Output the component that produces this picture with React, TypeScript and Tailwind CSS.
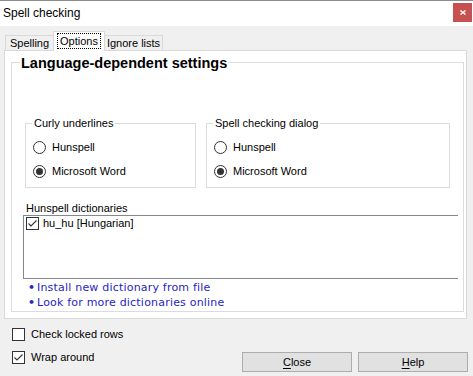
import React from "react";

const Check = () => (
  <svg width="11" height="11" viewBox="0 0 11 11" className="block">
    <polyline points="1.5,5.5 4,8 9.5,2.5" fill="none" stroke="#333" strokeWidth="1.1" />
  </svg>
);

function CheckBox({ checked }: { checked?: boolean }) {
  return (
    <span className="w-[13px] h-[13px] shrink-0 border border-[#333] bg-white flex items-center justify-center">
      {checked && <Check />}
    </span>
  );
}

function Radio({ label, checked }: { label: string; checked?: boolean }) {
  return (
    <div className="flex items-center gap-[6px] h-[13px]">
      <span className="w-[13px] h-[13px] shrink-0 rounded-full border border-[#333] bg-white flex items-center justify-center">
        {checked && <span className="w-[7px] h-[7px] rounded-full bg-[#333]" />}
      </span>
      <span className="leading-[13px]">{label}</span>
    </div>
  );
}

function Group({ title, width }: { title: string; width: string }) {
  return (
    <div className={`relative h-[65px] border border-[#dcdcdc] ${width}`}>
      <span className="absolute left-[6px] top-[-7px] bg-white px-[2px] leading-[13px]">{title}</span>
      <div className="flex flex-col gap-[11px] pt-[17px] pl-[7px]">
        <Radio label="Hunspell" />
        <Radio label="Microsoft Word" checked />
      </div>
    </div>
  );
}

const LINKS = ["Install new dictionary from file", "Look for more dictionaries online"];

export default function App() {
  return (
    <div className="w-[473px] h-[376px] bg-[#f0f0f0] border-t border-[#8c8c8c] flex flex-col font-['Liberation_Sans',Arial,sans-serif] text-[11px] text-black">
      {/* title bar */}
      <div className="h-[25px] bg-white flex items-start justify-between shrink-0">
        <span className="pl-[3px] pt-[5px] text-[12px] leading-[15px]">Spell checking</span>
        <span className="mt-[2px] mr-[1px] w-[19px] h-[19px] bg-[#c75050] flex items-center justify-center">
          <svg width="6" height="5" viewBox="0 0 6 5">
            <path d="M0.5 0.5 L5.5 4.5 M5.5 0.5 L0.5 4.5" stroke="#fff" strokeWidth="1.4" />
          </svg>
        </span>
      </div>

      <div className="px-[4px] pt-[5px] shrink-0">
        {/* tabs */}
        <div className="h-[19px] flex items-end pl-[1px]">
          <div className="w-[49px] h-[15px] border border-b-0 border-[#d9d9d9] bg-[#f0f0f0] flex items-center justify-center leading-[13px]">
            Spelling
          </div>
          <div className="relative z-10 -ml-[1px] -mb-[1px] w-[52px] h-[20px] border border-b-0 border-[#d9d9d9] bg-white flex justify-center pt-[1px]">
            <span className="h-[16px] w-[44px] outline outline-1 outline-dotted outline-black -outline-offset-1 flex items-center justify-center leading-[13px]">
              Options
            </span>
          </div>
          <div className="-ml-[1px] w-[59px] h-[15px] border border-b-0 border-[#d9d9d9] bg-[#f0f0f0] flex items-center justify-center leading-[13px]">
            Ignore lists
          </div>
        </div>

        {/* panel */}
        <div className="w-[463px] h-[269px] border border-[#d9d9d9] bg-white pt-[11px] pl-[6px]">
          <div className="relative w-[453px] h-[250px] border border-[#dcdcdc]">
            <span className="absolute left-[8px] top-[-8px] bg-white px-[1px] font-bold text-[14.5px] leading-[17px]">
              Language-dependent settings
            </span>

            <div className="mt-[60px] ml-[13px] flex gap-[10px]">
              <Group title="Curly underlines" width="w-[171px]" />
              <Group title="Spell checking dialog" width="w-[244px]" />
            </div>

            <div className="mt-[14px] ml-[14px] leading-[13px]">Hunspell dictionaries</div>
            <div className="ml-[11px] w-[435px] h-[64px] border-l border-t border-b border-[#828790] pl-[2px] pt-[1px]">
              <div className="flex items-center gap-[4px] h-[13px]">
                <CheckBox checked />
                <span className="leading-[13px]">hu_hu [Hungarian]</span>
              </div>
            </div>

            <div className="mt-[2px] ml-[16px] flex flex-col font-['DejaVu_Sans',Verdana,sans-serif] text-[11px] tracking-[0.2px] text-[#2626c4]">
              {LINKS.map((l) => (
                <div key={l} className="flex items-center h-[15px]">
                  <span className="w-[9px] text-[11px] font-bold">•</span>
                  <span>{l}</span>
                </div>
              ))}
            </div>
          </div>
        </div>
      </div>

      {/* bottom */}
      <div className="flex-1 flex justify-between">
        <div className="pl-[12px] pt-[9px] flex flex-col gap-[10px]">
          <div className="flex items-center gap-[6px] h-[13px]">
            <CheckBox />
            <span className="leading-[13px]">Check locked rows</span>
          </div>
          <div className="flex items-center gap-[6px] h-[13px]">
            <CheckBox checked />
            <span className="leading-[13px]">Wrap around</span>
          </div>
        </div>
        <div className="self-end mb-[4px] mr-[5px] flex gap-[6px]">
          <button className="w-[110px] h-[20px] bg-[#e1e1e1] border border-[#adadad] leading-[13px]">
            <span className="underline underline-offset-2">C</span>lose
          </button>
          <button className="w-[110px] h-[20px] bg-[#e1e1e1] border border-[#adadad] leading-[13px]">
            <span className="underline underline-offset-2">H</span>elp
          </button>
        </div>
      </div>
    </div>
  );
}
